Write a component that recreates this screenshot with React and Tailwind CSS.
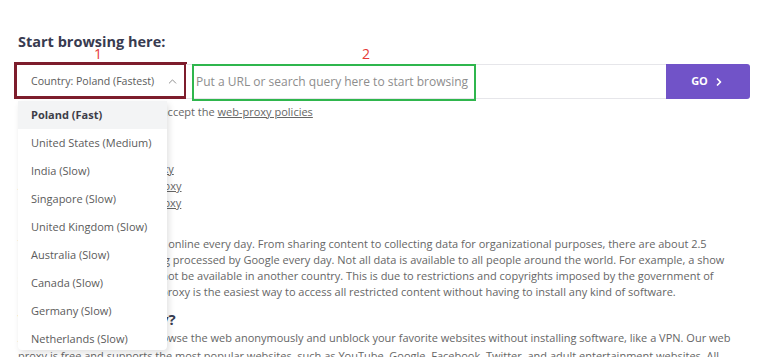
import React from 'react';
import { ChevronUp, ChevronRight } from 'lucide-react';

const countries = [
  'Poland (Fast)',
  'United States (Medium)',
  'India (Slow)',
  'Singapore (Slow)',
  'United Kingdom (Slow)',
  'Australia (Slow)',
  'Canada (Slow)',
  'Germany (Slow)',
  'Netherlands (Slow)',
];

const font = "font-['Open_Sans','Liberation_Sans',sans-serif]";

export default function App() {
  return (
    <div className={`w-[768px] h-[357px] overflow-hidden bg-white ${font}`}>
      <div className="px-[18px] pt-[33px]">
        <h2 className="text-[14.5px] leading-[18px] font-bold text-[#383b50]">Start browsing here:</h2>

        {/* search row */}
        <div className="relative mt-[13px] flex h-[35px]">
          <div className="relative w-[168px] shrink-0">
            <div className="flex h-full items-center justify-between whitespace-nowrap bg-white pl-[13px] pr-[7px] text-[10.6px] text-[#5b5b5b]">
              <span>Country: Poland (Fastest)</span>
              <ChevronUp size={13} strokeWidth={1.5} className="text-[#777]" />
            </div>
            {/* annotation 1 */}
            <div className="pointer-events-none absolute -left-[4px] -top-[2px] h-[37px] w-[173px] border-[3px] border-[#7d1d2c]" />
            <span className="absolute left-[76px] -top-[18px] text-[14px] leading-[16px] text-[#e53935]">1</span>

            {/* dropdown */}
            <ul className="absolute left-0 top-[37px] z-10 h-[249px] w-[149px] overflow-hidden rounded-b-[4px] bg-white shadow-[2px_3px_6px_rgba(0,0,0,0.12)]">
              {countries.map((c, i) => (
                <li
                  key={c}
                  className={`flex h-[28px] items-center whitespace-nowrap pl-[13px] text-[11px] ${i === 0 ? 'bg-[#f3f4f5] font-bold text-[#3d3d48]' : 'text-[#5b5b5b]'}`}
                >
                  {c}
                </li>
              ))}
            </ul>
          </div>

          <div className="relative flex-1 border-y border-[#e6e6ea] bg-white">
            <div className="flex h-full items-center pl-[10px] text-[12px] text-[#8d8d8d]">
              Put a URL or search query here to start browsing
            </div>
            {/* annotation 2 */}
            <div className="pointer-events-none absolute left-[6px] -top-[1px] h-[37px] w-[284px] border-2 border-[#2fb64d]" />
            <span className="absolute left-[176px] -top-[19px] text-[14px] leading-[16px] text-[#e53935]">2</span>
          </div>

          <button className="flex w-[84px] shrink-0 items-center justify-center gap-[5px] rounded-r-[3px] bg-[#7153c8] text-[11px] font-bold text-white">
            GO
            <ChevronRight size={12} strokeWidth={3.5} />
          </button>
        </div>

        <p className="mt-[5px] whitespace-nowrap text-[11px] leading-[16px] text-[#666]">
          By using the web proxy you accept the{' '}
          <a className="underline">web-proxy policies</a>
        </p>

        <p className="mt-[18px] text-[11px] font-bold leading-[16px] text-[#383b50]">Popular sites:</p>
        <ul className="mt-[6px] whitespace-nowrap text-[11px] leading-[17px] text-[#666]">
          <li><a className="underline">Unblock YouTube with a proxy</a></li>
          <li><a className="underline">Access Facebook with our proxy</a></li>
          <li><a className="underline">Browse Reddit with a free proxy</a></li>
        </ul>

        <h3 className="mt-[3px] text-[15px] font-bold leading-[18px] text-[#383b50]">Free Web Proxy</h3>
        <p className="mt-[4px] whitespace-nowrap text-[11px] leading-[16px] text-[#666]">
          Terabytes of data are shared online every day. From sharing content to collecting data for organizational purposes, there are about 2.5
          <br />
          quintillion bytes of data being processed by Google every day. Not all data is available to all people around the world. For example, a show
          <br />
          available in one nation may not be available in another country. This is due to restrictions and copyrights imposed by the government of
          <br />
          of each country. A free web proxy is the easiest way to access all restricted content without having to install any kind of software.
        </p>

        <h3 className="mt-[10px] text-[15px] font-bold leading-[18px] text-[#383b50]">What is a web proxy?</h3>
        <p className="mt-[1px] whitespace-nowrap text-[11px] leading-[18px] text-[#666]">
          A free web proxy lets you browse the web anonymously and unblock your favorite websites without installing software, like a VPN. Our web
          <br />
          proxy is free and supports the most popular websites, such as YouTube, Google, Facebook, Twitter, and adult entertainment websites. All
        </p>
      </div>
    </div>
  );
}
